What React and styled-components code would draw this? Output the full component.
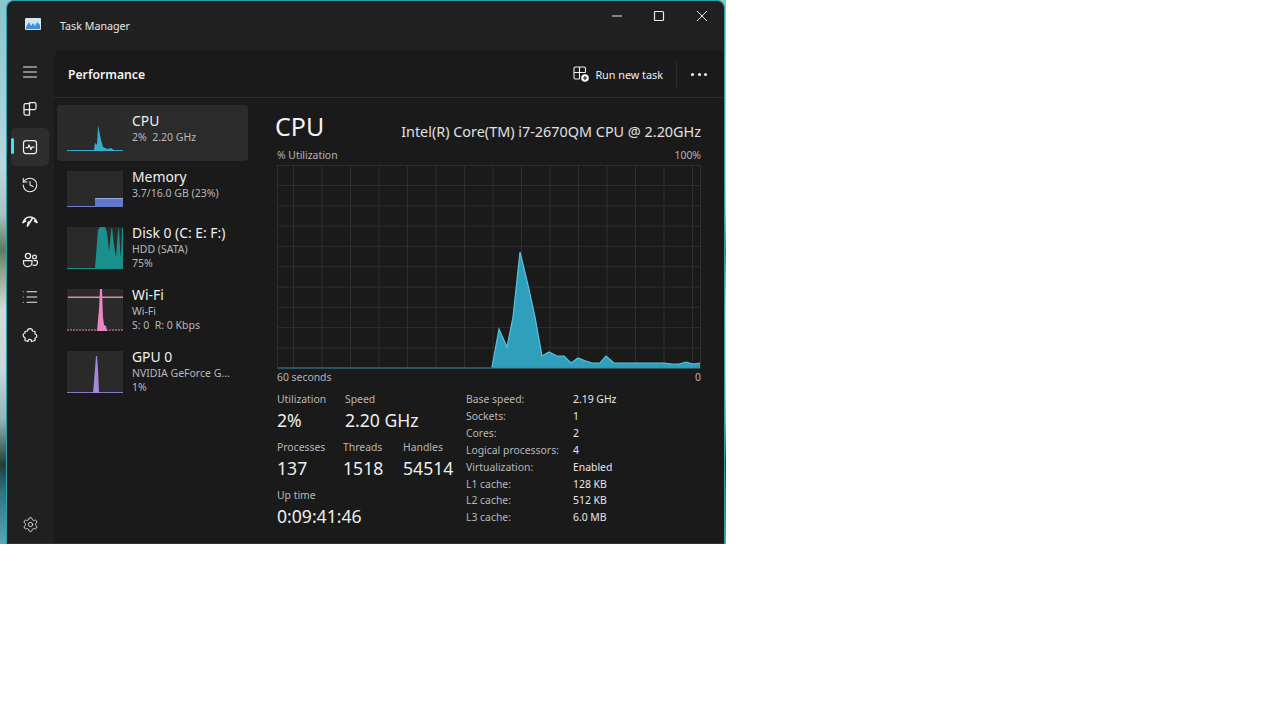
import React from "react";
import styled, { createGlobalStyle } from "styled-components";
import { History, List, Settings } from "lucide-react";

const FONT = `"Noto Sans", "Open Sans", "Liberation Sans", sans-serif`;

const GlobalStyle = createGlobalStyle`
  html, body {
    margin: 0;
    background: #fff;
    overflow: hidden;
  }
  * {
    box-sizing: border-box;
  }
`;

const devices = [
  { id: "cpu", name: "CPU", lines: ["2%  2.20 GHz"], active: true },
  { id: "memory", name: "Memory", lines: ["3.7/16.0 GB (23%)"] },
  { id: "disk", name: "Disk 0 (C: E: F:)", lines: ["HDD (SATA)", "75%"] },
  { id: "wifi", name: "Wi-Fi", lines: ["Wi-Fi", "S: 0  R: 0 Kbps"] },
  { id: "gpu", name: "GPU 0", lines: ["NVIDIA GeForce G...", "1%"] },
];

const specs = [
  ["Base speed:", "2.19 GHz"],
  ["Sockets:", "1"],
  ["Cores:", "2"],
  ["Logical processors:", "4"],
  ["Virtualization:", "Enabled"],
  ["L1 cache:", "128 KB"],
  ["L2 cache:", "512 KB"],
  ["L3 cache:", "6.0 MB"],
];

// x from the left of the graph, y from the top of the window
const cpuPoints =
  "215,367 222,329 230,347 236,317 243,252 251,285 258,317 265,356 272,352 280,356 287,356 294,363 301,358 309,361 315,363 323,363 329,356 337,363 387,363 395,364 402,364 409,362 416,364 423,363";

const Icon = ({ children }) => (
  <svg width="18" height="18" viewBox="0 0 18 18" fill="none" stroke="currentColor" strokeWidth="1.25" strokeLinecap="round" strokeLinejoin="round">
    {children}
  </svg>
);

const MiniChart = ({ id }) => {
  if (id === "cpu")
    return (
      <svg width="56" height="36" viewBox="0 0 56 36">
        <polygon points="0,36 0,35 27,35 28,28 30,30 31,10 34,25 36,32 38,33 41,34 44,33 47,35 56,35 56,36" fill="#33aecb" />
      </svg>
    );
  if (id === "memory")
    return (
      <svg width="56" height="36" viewBox="0 0 56 36">
        <rect x="0" y="35" width="28" height="1" fill="#7080d0" />
        <rect x="28" y="27" width="28" height="9" fill="#6577c9" />
        <rect x="28" y="27" width="28" height="1" fill="#98a6ea" />
      </svg>
    );
  if (id === "disk")
    return (
      <svg width="56" height="42" viewBox="0 0 56 42">
        <polygon points="0,42 0,41 28,41 31,3 33,0 38,0 40,5 42,24 44,4 45,0 47,18 49,30 51,4 52,0 53,22 54,30 55,2 56,0 56,42" fill="#1a908d" />
      </svg>
    );
  if (id === "wifi")
    return (
      <svg width="56" height="42" viewBox="0 0 56 42">
        <rect x="1" y="7.5" width="55" height="1.5" fill="#e583be" />
        <line x1="0" y1="41" x2="56" y2="41" stroke="#d878b2" strokeDasharray="2 1" />
        <polygon points="30,42 32,20 33,0 35,0 36,28 37,36 39,37 40,42" fill="#ea86c4" />
      </svg>
    );
  return (
    <svg width="56" height="42" viewBox="0 0 56 42">
      <rect x="0" y="41" width="56" height="1" fill="#8d78c4" />
      <polygon points="26,42 28,18 29,5 30,5 31,18 32,42" fill="#a488dc" />
    </svg>
  );
};

const App = () => (
  <>
    <GlobalStyle />
    <Desktop>
      <Window>
        <TitleBar>
          <AppLogo>
            <svg width="16" height="12" viewBox="0 0 16 12">
              <rect width="16" height="12" rx="1" fill="#cfe6f7" />
              <path d="M1 9 L4 4 L6 8 L8 5 L10 8 L12 4 L15 7 L15 11 L1 11 Z" fill="#3f8fd8" />
            </svg>
          </AppLogo>
          <AppTitle>Task Manager</AppTitle>
          <WindowControls>
            <WindowButton>
              <svg width="12" height="12" viewBox="0 0 12 12" stroke="currentColor" fill="none">
                <line x1="1" y1="6" x2="11" y2="6" />
              </svg>
            </WindowButton>
            <WindowButton>
              <svg width="12" height="12" viewBox="0 0 12 12" stroke="currentColor" fill="none" strokeWidth="1.2">
                <rect x="1.5" y="1.5" width="9" height="9" rx="1" />
              </svg>
            </WindowButton>
            <WindowButton>
              <svg width="12" height="12" viewBox="0 0 12 12" stroke="currentColor" fill="none">
                <path d="M1 1 L11 11 M11 1 L1 11" />
              </svg>
            </WindowButton>
          </WindowControls>
        </TitleBar>
        <Body>
          <Rail>
            <RailButton>
              <Icon>
                <path d="M2.5 4 H15.5 M2.5 9 H15.5 M2.5 14 H15.5" strokeWidth="1" />
              </Icon>
            </RailButton>
            <RailButton>
              <Icon>
                <path d="M3 5 A1.5 1.5 0 0 1 4.5 3.5 H8.5 V9.5 H3 Z M8.5 2.5 H13.5 A1.5 1.5 0 0 1 15 4 V8 A1.5 1.5 0 0 1 13.5 9.5 H8.5 Z M3 9.5 H8.5 V15 H4.5 A1.5 1.5 0 0 1 3 13.5 Z" />
              </Icon>
            </RailButton>
            <RailButton $active>
              <Icon>
                <rect x="2.5" y="2.5" width="13" height="13" rx="2.5" />
                <path d="M5 9.5 H7 L8 7 L10 11.5 L11 9 H13" />
              </Icon>
            </RailButton>
            <RailButton>
              <History size={18} strokeWidth={1.4} />
            </RailButton>
            <RailButton>
              <Icon>
                <path d="M2 9.5 C3.5 5.5 6 4 9 4 C12 4 14.5 5.5 16 9.5 L13.5 8 M2 9.5 L4.5 8 M6.5 13 L11.5 5 M6.5 13 L7.5 9" strokeWidth="1.7" />
              </Icon>
            </RailButton>
            <RailButton>
              <Icon>
                <circle cx="7" cy="5" r="2.6" />
                <circle cx="13.5" cy="6" r="1.9" />
                <path d="M2.5 9.5 H11 V11.5 A4 4 0 0 1 7 15.5 H6.5 A4 4 0 0 1 2.5 11.5 Z" />
                <path d="M13 9.5 H15.5 A1 1 0 0 1 16.5 10.5 V11 A3 3 0 0 1 12 14" />
              </Icon>
            </RailButton>
            <RailButton>
              <List size={18} strokeWidth={1.4} />
            </RailButton>
            <RailButton>
              <Icon>
                <path d="M6.5 5 C6.5 1.8 11.5 1.8 11.5 5 L14 5.5 L14 8 C16.5 8.5 16.5 11.5 14 12 L14 14.5 L10.5 15.5 C10.5 12.8 7 12.8 7 15.5 L4 14.5 L4 11.5 C1.5 11 1.5 7.5 4 7 L4 5.5 Z" />
              </Icon>
            </RailButton>
            <SettingsSlot>
              <RailButton>
                <Settings size={17} strokeWidth={1.2} />
              </RailButton>
            </SettingsSlot>
          </Rail>
          <Main>
            <PageHeader>
              <PageTitle>Performance</PageTitle>
              <RunTask>
                <svg width="16" height="16" viewBox="0 0 16 16" fill="none" stroke="currentColor" strokeWidth="1.1">
                  <path d="M6.5 13 H2.5 A1.5 1.5 0 0 1 1 11.5 V2.5 A1.5 1.5 0 0 1 2.5 1 H11 A1.5 1.5 0 0 1 12.5 2.5 V6.5 M1 6.5 H12.5 M6.5 1 V13" />
                  <circle cx="12" cy="12" r="3.8" fill="#fff" stroke="none" />
                  <path d="M12 10 V14 M10 12 H14" stroke="#1a1a1a" />
                </svg>
                Run new task
              </RunTask>
              <HeaderDivider />
              <MoreDots>
                <span />
                <span />
                <span />
              </MoreDots>
            </PageHeader>
            <Columns>
              <DeviceList>
                {devices.map((d) => (
                  <DeviceRow key={d.id} $active={d.active}>
                    <Thumb>
                      <MiniChart id={d.id} />
                    </Thumb>
                    <DeviceText>
                      <DeviceName>{d.name}</DeviceName>
                      {d.lines.map((line) => (
                        <DeviceLine key={line}>{line}</DeviceLine>
                      ))}
                    </DeviceText>
                  </DeviceRow>
                ))}
              </DeviceList>
              <Detail>
                <DetailHead>
                  <BigTitle>CPU</BigTitle>
                  <CpuModel>Intel(R) Core(TM) i7-2670QM CPU @ 2.20GHz</CpuModel>
                </DetailHead>
                <AxisRow>
                  <span>% Utilization</span>
                  <span>100%</span>
                </AxisRow>
                <Graph>
                  <svg width="424" height="204" viewBox="0 0 424 204">
                    {Array.from({ length: 9 }, (_, i) => (
                      <line key={i} x1="0" x2="424" y1={20.5 + i * 20.3} y2={20.5 + i * 20.3} stroke="#2e2e2e" />
                    ))}
                    {Array.from({ length: 15 }, (_, i) => (
                      <line key={i} y1="0" y2="204" x1={16.5 + i * 28.5} x2={16.5 + i * 28.5} stroke="#2e2e2e" />
                    ))}
                    <g transform="translate(0 -165)">
                      <polygon points={`${cpuPoints} 423,368 215,368`} fill="#2f9fbc" />
                      <polyline points={cpuPoints} fill="none" stroke="#55c4e0" strokeWidth="1.2" />
                    </g>
                    <line x1="0" x2="424" y1="203" y2="203" stroke="#3a8ea5" />
                  </svg>
                </Graph>
                <AxisRow $below>
                  <span>60 seconds</span>
                  <span>0</span>
                </AxisRow>
                <Stats>
                  <StatColumn>
                    <StatRow>
                      <Stat $width={68}>
                        <StatLabel>Utilization</StatLabel>
                        <StatValue>2%</StatValue>
                      </Stat>
                      <Stat>
                        <StatLabel>Speed</StatLabel>
                        <StatValue>2.20 GHz</StatValue>
                      </Stat>
                    </StatRow>
                    <StatRow>
                      <Stat $width={66}>
                        <StatLabel>Processes</StatLabel>
                        <StatValue>137</StatValue>
                      </Stat>
                      <Stat $width={60}>
                        <StatLabel>Threads</StatLabel>
                        <StatValue>1518</StatValue>
                      </Stat>
                      <Stat>
                        <StatLabel>Handles</StatLabel>
                        <StatValue>54514</StatValue>
                      </Stat>
                    </StatRow>
                    <StatRow>
                      <Stat>
                        <StatLabel>Up time</StatLabel>
                        <StatValue>0:09:41:46</StatValue>
                      </Stat>
                    </StatRow>
                  </StatColumn>
                  <SpecGrid>
                    {specs.map(([label, value]) => (
                      <React.Fragment key={label}>
                        <SpecLabel>{label}</SpecLabel>
                        <SpecValue>{value}</SpecValue>
                      </React.Fragment>
                    ))}
                  </SpecGrid>
                </Stats>
              </Detail>
            </Columns>
          </Main>
        </Body>
      </Window>
    </Desktop>
  </>
);

export default App;

const Desktop = styled.div`
  width: 726px;
  height: 544px;
  padding: 0 1px 0 6px;
  font-family: ${FONT};
  color: #fff;
  background: linear-gradient(
    to bottom,
    #8ac4cc 0,
    #b9d7de 170px,
    #a9c0c0 215px,
    #5d7a5e 250px,
    #8ea088 270px,
    #d5dbda 310px,
    #c8d6da 370px,
    #8fb4b8 420px,
    #1f3f34 465px,
    #2f6f80 490px,
    #5aa6b8 544px
  );
`;

const Window = styled.div`
  height: 100%;
  display: flex;
  flex-direction: column;
  background: #202020;
  border: 1px solid #2fa0ab;
  border-bottom: 1px solid #333;
  border-radius: 8px 8px 0 0;
  overflow: hidden;
`;

const TitleBar = styled.div`
  height: 49px;
  flex: none;
  display: flex;
  align-items: flex-start;
  padding: 0 1px 0 18px;
`;

const AppLogo = styled.div`
  margin-top: 17px;
  height: 12px;
  display: flex;
`;

const AppTitle = styled.div`
  margin: 16px 0 0 19px;
  font-size: 10.7px;
  line-height: 18px;
  color: #e6e6e6;
`;

const WindowControls = styled.div`
  margin-left: auto;
  display: flex;
`;

const WindowButton = styled.div`
  width: 42.5px;
  height: 30px;
  display: flex;
  align-items: center;
  justify-content: center;
  color: #e8e8e8;
`;

const Body = styled.div`
  flex: 1;
  min-height: 0;
  display: flex;
`;

const Rail = styled.nav`
  width: 47px;
  flex: none;
  display: flex;
  flex-direction: column;
  padding: 3px 0 0 4px;
`;

const RailButton = styled.div`
  position: relative;
  width: 38px;
  height: 37.6px;
  flex: none;
  display: flex;
  align-items: center;
  justify-content: center;
  color: #ededed;
  border-radius: 5px;
  background: ${(p) => (p.$active ? "#2d2d2d" : "transparent")};

  ${(p) =>
    p.$active &&
    `&::before {
      content: "";
      position: absolute;
      left: 0;
      top: 10px;
      width: 3px;
      height: 16px;
      border-radius: 2px;
      background: #3fe3ea;
    }`}
`;

const SettingsSlot = styled.div`
  margin-top: auto;
`;

const Main = styled.main`
  flex: 1;
  min-width: 0;
  display: flex;
  flex-direction: column;
  background: #1a1a1a;
  border-top-left-radius: 8px;
`;

const PageHeader = styled.header`
  height: 48px;
  flex: none;
  display: flex;
  align-items: center;
  padding: 1px 17px 0 14px;
  border-bottom: 1px solid #2c2c2c;
`;

const PageTitle = styled.h1`
  margin: 0;
  font-size: 12.2px;
  font-weight: 600;
  color: #f2f2f2;
`;

const RunTask = styled.div`
  margin-left: auto;
  display: flex;
  align-items: center;
  gap: 6px;
  font-size: 10.8px;
  color: #f0f0f0;
`;

const HeaderDivider = styled.div`
  width: 1px;
  height: 27px;
  margin: 0 14px 0 13px;
  background: #2c2c2c;
`;

const MoreDots = styled.div`
  display: flex;
  gap: 3.5px;

  span {
    width: 3px;
    height: 3px;
    border-radius: 50%;
    background: #f2f2f2;
  }
`;

const Columns = styled.div`
  flex: 1;
  min-height: 0;
  display: flex;
`;

const DeviceList = styled.aside`
  width: 196px;
  flex: none;
  padding: 7px 2px 0 3px;
`;

const DeviceRow = styled.div`
  display: flex;
  gap: 9px;
  padding: 10px;
  border-radius: 4px;
  background: ${(p) => (p.$active ? "#2b2b2b" : "transparent")};
`;

const Thumb = styled.div`
  width: 56px;
  flex: none;
  display: flex;
  align-self: flex-start;
  background: #2a2a2a;

  svg {
    display: block;
  }
`;

const DeviceText = styled.div`
  min-width: 0;
  margin: -4px 0 -2px;
`;

const DeviceName = styled.div`
  margin-bottom: -1px;
  font-size: 13.9px;
  line-height: 20px;
  color: #f0f0f0;
  white-space: nowrap;
`;

const DeviceLine = styled.div`
  font-size: 10.5px;
  line-height: 14px;
  color: #b8b8b8;
  white-space: pre;
`;

const Detail = styled.section`
  flex: 1;
  min-width: 0;
  padding: 11px 23px 0 25px;
`;

const DetailHead = styled.div`
  height: 37px;
  display: flex;
  align-items: center;
  justify-content: space-between;
`;

const BigTitle = styled.div`
  font-size: 25px;
  line-height: 36px;
  margin-top: -3px;
  color: #f2f2f2;
`;

const CpuModel = styled.div`
  font-size: 14.4px;
  margin-top: 8px;
  color: #e0e0e0;
`;

const AxisRow = styled.div`
  height: ${(p) => (p.$below ? "15px" : "14px")};
  margin: ${(p) => (p.$below ? "0" : "2px 0 3px")};
  padding: 0 0 0 2px;
  display: flex;
  justify-content: space-between;
  align-items: center;
  font-size: 10.4px;
  color: #b5b5b5;
`;

const Graph = styled.div`
  height: 204px;
  margin-left: 2px;
  border: 1px solid #2e2e2e;
  border-bottom: 0;
  overflow: hidden;

  svg {
    display: block;
    margin: -1px 0 0 -1px;
  }
`;

const Stats = styled.div`
  display: flex;
  padding: 7px 0 0 2px;
`;

const StatColumn = styled.div`
  width: 189px;
  flex: none;
`;

const StatRow = styled.div`
  height: 48px;
  display: flex;
`;

const Stat = styled.div`
  width: ${(p) => (p.$width ? `${p.$width}px` : "auto")};
  flex: none;
`;

const StatLabel = styled.div`
  font-size: 10.4px;
  line-height: 16px;
  color: #b8b8b8;
`;

const StatValue = styled.div`
  font-size: 17.6px;
  line-height: 26px;
  color: #eee;
`;

const SpecGrid = styled.div`
  display: grid;
  grid-template-columns: 107px auto;
  grid-auto-rows: 16.85px;
  align-items: center;
  align-content: start;
`;

const SpecLabel = styled.div`
  font-size: 10.4px;
  color: #b8b8b8;
`;

const SpecValue = styled.div`
  font-size: 10.4px;
  color: #e8e8e8;
`;
